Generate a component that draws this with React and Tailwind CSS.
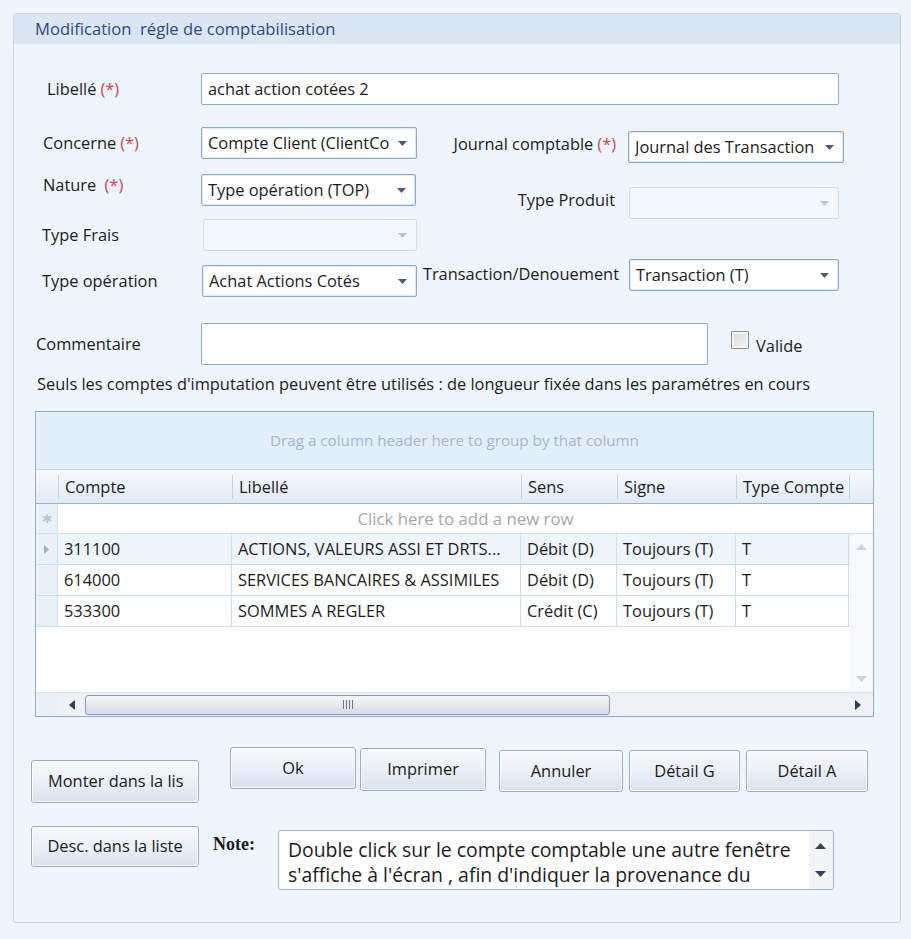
import React from "react";

function Req() {
  return <span className="text-[#c8474f] ml-[4px]">(*)</span>;
}

function Select({ value, width = "w-[216px]", disabled = false }) {
  return (
    <div
      className={`${width} h-[32px] flex items-center justify-between pl-[6px] pr-[9px] rounded-[2px] border ${
        disabled
          ? "bg-[#f2f7fd] border-[#d3deeb]"
          : "bg-white border-[#8eaad2] shadow-[inset_0_0_0_1px_#dfe9f6]"
      }`}
    >
      <span className="truncate">{value}</span>
      <svg width="9" height="5" viewBox="0 0 9 5" className="shrink-0">
        <path d="M0 0h9L4.5 5z" fill={disabled ? "#b9c7d8" : "#4b5b74"} />
      </svg>
    </div>
  );
}

function Btn({ children, className = "" }) {
  return (
    <button
      className={`flex items-center justify-center rounded-[3px] border border-[#9aadc8] bg-gradient-to-b from-[#f7f9fc] via-[#eaf0f7] to-[#d8e2ef] text-[#1b1b1b] shadow-[inset_0_0_0_1px_#ffffff] ${className}`}
    >
      {children}
    </button>
  );
}

const cols = [
  { key: "compte", label: "Compte", w: "w-[174px]" },
  { key: "libelle", label: "Libellé", w: "w-[289px]" },
  { key: "sens", label: "Sens", w: "w-[96px]" },
  { key: "signe", label: "Signe", w: "w-[119px]" },
  { key: "type", label: "Type Compte", w: "w-[113px]" },
];

const rows = [
  { compte: "311100", libelle: "ACTIONS, VALEURS ASSI ET DRTS...", sens: "Débit (D)", signe: "Toujours (T)", type: "T" },
  { compte: "614000", libelle: "SERVICES BANCAIRES & ASSIMILES", sens: "Débit (D)", signe: "Toujours (T)", type: "T" },
  { compte: "533300", libelle: "SOMMES A REGLER", sens: "Crédit (C)", signe: "Toujours (T)", type: "T" },
];

function Grid() {
  return (
    <div className="ml-[21px] w-[839px] h-[306px] border border-[#8eaed8] flex flex-col bg-white">
      {/* group panel */}
      <div className="h-[58px] bg-[#e3eefb] border-b border-[#c5d7ee] flex items-center justify-center text-[#a3b7d2] text-[15.2px]">
        Drag a column header here to group by that column
      </div>
      {/* header */}
      <div className="h-[34px] flex bg-gradient-to-b from-[#f7fafe] to-[#dfeaf8] border-b border-[#94b4de]">
        <div className="w-[22px]" />
        {cols.map((c) => (
          <div key={c.key} className={`${c.w} flex items-center`}>
            <div className="w-px h-[24px] bg-[#bcd2ee]" />
            <span className="pl-[6px] pt-[2px] whitespace-nowrap">{c.label}</span>
          </div>
        ))}
        <div className="flex-1 flex items-center">
          <div className="w-px h-[24px] bg-[#bcd2ee]" />
        </div>
      </div>
      {/* new row */}
      <div className="h-[30px] flex border-b border-[#cfdff2]">
        <div className="w-[22px] bg-[#e8f0fa] border-r border-[#cfdff2] flex items-center justify-center text-[#b5c6dc] text-[12px]">
          ✱
        </div>
        <div className="flex-1 flex items-center justify-center text-[#a6a6a6] text-[16.8px]">
          Click here to add a new row
        </div>
      </div>
      {/* body */}
      <div className="flex-1 flex">
        <div className="w-[814px] flex flex-col">
          {rows.map((r, i) => (
            <div
              key={r.compte}
              className={`h-[31px] flex border-b border-[#cfdff2] ${i === 0 ? "bg-[#eef5fd]" : "bg-white"}`}
            >
              <div className="w-[22px] bg-[#e8f0fa] border-r border-[#cfdff2] flex items-center justify-center">
                {i === 0 && (
                  <svg width="5" height="9" viewBox="0 0 5 9">
                    <path d="M0 0l5 4.5L0 9z" fill="#9fb1c8" />
                  </svg>
                )}
              </div>
              {cols.map((c) => (
                <div
                  key={c.key}
                  className={`${c.w} flex items-center pl-[6px] pt-[1px] border-r border-[#cfdff2] whitespace-nowrap overflow-hidden`}
                >
                  {r[c.key]}
                </div>
              ))}
            </div>
          ))}
          <div className="flex-1" />
        </div>
        <div className="flex-1 bg-[#f7f9fc] flex flex-col items-center justify-between py-[10px]">
          <svg width="11" height="6" viewBox="0 0 11 6">
            <path d="M0 6L5.5 0 11 6z" fill="#ccd4de" />
          </svg>
          <svg width="11" height="6" viewBox="0 0 11 6">
            <path d="M0 0h11L5.5 6z" fill="#ccd4de" />
          </svg>
        </div>
      </div>
      {/* horizontal scrollbar */}
      <div className="h-[24px] flex border-t border-[#e1e6ee]">
        <div className="w-[22px] bg-[#e8f0fa]" />
        <div className="flex-1 flex items-center bg-[#eef1f5]">
          <div className="w-[27px] flex items-center justify-center">
            <svg width="6" height="10" viewBox="0 0 6 10">
              <path d="M6 0v10L0 5z" fill="#2f3c4e" />
            </svg>
          </div>
          <div className="w-[525px] h-[20px] rounded-[3px] border border-[#8c99ab] bg-gradient-to-b from-[#f6f7f9] to-[#d5dbe4] flex items-center justify-center">
            <div className="flex gap-[2px]">
              <div className="w-px h-[9px] bg-[#6d7a8c]" />
              <div className="w-px h-[9px] bg-[#6d7a8c]" />
              <div className="w-px h-[9px] bg-[#6d7a8c]" />
              <div className="w-px h-[9px] bg-[#6d7a8c]" />
            </div>
          </div>
          <div className="flex-1" />
          <div className="w-[30px] flex items-center justify-center">
            <svg width="6" height="10" viewBox="0 0 6 10">
              <path d="M0 0v10L6 5z" fill="#2f3c4e" />
            </svg>
          </div>
        </div>
      </div>
    </div>
  );
}

export default function App() {
  return (
    <div className="min-h-screen bg-[#eef5fd] pt-[13px] pl-[13px] font-['Open_Sans',sans-serif] text-[16.4px] text-[#1c1c1c]">
      <div className="w-[888px] h-[910px] border border-[#c6d3e3] rounded-[3px] flex flex-col">
        {/* Title */}
        <div className="h-[30px] bg-[#dbe6f4] flex items-center pl-[21px] text-[#2b4a86] text-[16.6px] whitespace-pre">
          Modification  régle de comptabilisation
        </div>

        {/* Libellé */}
        <div className="mt-[29px] flex items-center">
          <div className="w-[187px] pl-[33px]">
            Libellé<Req />
          </div>
          <div className="w-[638px] h-[32px] bg-white border border-[#8eaad2] rounded-[2px] flex items-center pl-[6px]">
            achat action cotées 2
          </div>
        </div>

        {/* Two columns */}
        <div className="mt-[22px] flex">
          <div className="flex flex-col">
            <div className="flex items-center">
              <div className="w-[187px] pl-[29px]">
                Concerne<Req />
              </div>
              <Select value="Compte Client (ClientCo" />
            </div>
            <div className="mt-[15px] flex items-center">
              <div className="w-[187px] pl-[29px] -mt-[10px]">
                Nature <Req />
              </div>
              <Select value="Type opération (TOP)" width="w-[215px]" />
            </div>
            <div className="mt-[13px] flex items-center">
              <div className="w-[189px] pl-[28px]">Type Frais</div>
              <Select value="" width="w-[214px]" disabled />
            </div>
            <div className="mt-[14px] flex items-center">
              <div className="w-[188px] pl-[28px]">Type opération</div>
              <Select value="Achat Actions Cotés" width="w-[215px]" />
            </div>
          </div>
          <div className="flex flex-col">
            <div className="mt-[4px] flex items-center">
              <div className="w-[211px] pr-[12px] text-right -mt-[5px] whitespace-nowrap">
                Journal comptable<Req />
              </div>
              <Select value="Journal des Transaction" width="w-[216px]" />
            </div>
            <div className="mt-[24px] flex items-center">
              <div className="w-[212px] pr-[14px] text-right -mt-[6px]">Type Produit</div>
              <Select value="" width="w-[210px]" disabled />
            </div>
            <div className="mt-[40px] flex items-center">
              <div className="w-[212px] pr-[10px] text-right -mt-[2px] whitespace-nowrap">
                Transaction/Denouement
              </div>
              <Select value="Transaction (T)" width="w-[210px]" />
            </div>
          </div>
        </div>

        {/* Commentaire */}
        <div className="mt-[26px] flex items-center">
          <div className="w-[187px] pl-[22px]">Commentaire</div>
          <div className="w-[507px] h-[42px] bg-white border border-[#8eaad2] rounded-[2px]" />
          <div className="ml-[23px] flex items-center">
            <div className="w-[18px] h-[18px] -mt-[8px] border border-[#8f9090] rounded-[1px] bg-gradient-to-br from-[#d8d8d8] to-[#f6f6f6] shadow-[inset_0_0_0_2px_#f4f4f4]" />
            <span className="ml-[7px] mt-[4px]">Valide</span>
          </div>
        </div>

        {/* Info */}
        <div className="mt-[9px] ml-[23px] h-[20px] leading-[20px] whitespace-nowrap">
          Seuls les comptes d'imputation peuvent être utilisés : de longueur fixée dans les paramétres en cours
        </div>

        <div className="mt-[17px]">
          <Grid />
        </div>

        {/* Buttons row */}
        <div className="mt-[30px] flex items-start">
          <Btn className="ml-[17px] mt-[13px] w-[168px] h-[43px] justify-start pl-[16px] whitespace-nowrap overflow-hidden">
            Monter dans la lis
          </Btn>
          <Btn className="ml-[31px] w-[126px] h-[42px]">Ok</Btn>
          <Btn className="ml-[4px] mt-[1px] w-[126px] h-[43px]">Imprimer</Btn>
          <Btn className="ml-[13px] mt-[3px] w-[124px] h-[42px]">Annuler</Btn>
          <Btn className="ml-[6px] mt-[3px] w-[111px] h-[42px]">Détail G</Btn>
          <Btn className="ml-[6px] mt-[3px] w-[122px] h-[42px]">Détail A</Btn>
        </div>

        {/* Second row */}
        <div className="mt-[23px] flex items-start">
          <Btn className="ml-[17px] w-[168px] h-[41px]">Desc. dans la liste</Btn>
          <div className="ml-[14px] mt-[5px] font-['Liberation_Serif',serif] font-bold text-[18px]">
            Note:
          </div>
          <div className="ml-[23px] mt-[4px] w-[556px] h-[60px] bg-white border border-[#9db6da] rounded-[2px] flex overflow-hidden">
            <div className="flex-1 pl-[9px] pr-[6px] pt-[6px] leading-[25px] text-[19.4px] overflow-hidden">
              Double click sur le compte comptable une autre fenêtre s'affiche à l'écran , afin d'indiquer la provenance du
            </div>
            <div className="w-[24px] bg-[#f3f4f6] flex flex-col items-center justify-between py-[12px]">
              <svg width="11" height="6" viewBox="0 0 11 6">
                <path d="M0 6L5.5 0 11 6z" fill="#36465c" />
              </svg>
              <svg width="11" height="6" viewBox="0 0 11 6">
                <path d="M0 0h11L5.5 6z" fill="#36465c" />
              </svg>
            </div>
          </div>
        </div>
      </div>
    </div>
  );
}
